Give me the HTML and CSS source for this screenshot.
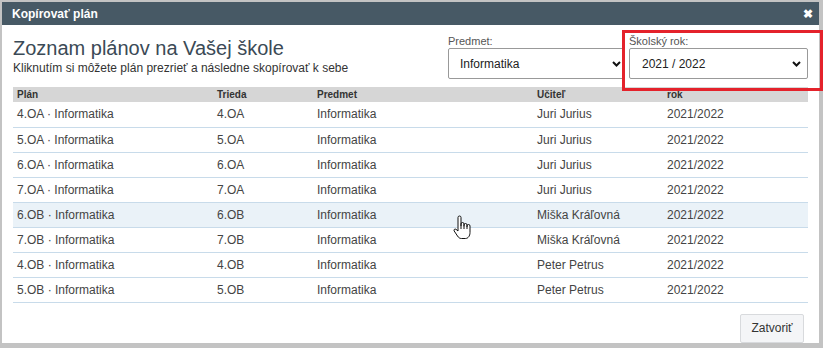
FILE: index.html
```html
<!DOCTYPE html>
<html lang="sk">
<head>
    <meta charset="UTF-8">
    <meta name="viewport" content="width=device-width, initial-scale=1.0">
    <title>Kopírovať plán</title>
    <link rel="stylesheet" href="styles.css">
</head>
<body>
    <div class="dialog">
        <div class="titlebar">
            <span class="title">Kopírovať plán</span>
            <span class="close">&#10006;</span>
        </div>
        <div class="content">
            <div class="top">
                <div class="heading">
                    <h1>Zoznam plánov na Vašej škole</h1>
                    <p class="sub">Kliknutím si môžete plán prezrieť a následne skopírovať k sebe</p>
                </div>
                <div class="filters">
                    <div class="field subject">
                        <label>Predmet:</label>
                        <div class="select">
                            <span>Informatika</span>
                            <svg class="chev" viewBox="0 0 9 6" width="9" height="6"><path d="M1 1 L4.5 4.5 L8 1" fill="none" stroke="#111" stroke-width="2"/></svg>
                        </div>
                    </div>
                    <div class="field year">
                        <label>Školský rok:</label>
                        <div class="select">
                            <span>2021 / 2022</span>
                            <svg class="chev" viewBox="0 0 9 6" width="9" height="6"><path d="M1 1 L4.5 4.5 L8 1" fill="none" stroke="#111" stroke-width="2"/></svg>
                        </div>
                    </div>
                </div>
            </div>

            <table class="plans">
                <thead>
                    <tr>
                        <th class="c1">Plán</th>
                        <th class="c2">Trieda</th>
                        <th class="c3">Predmet</th>
                        <th class="c4">Učiteľ</th>
                        <th class="c5">rok</th>
                    </tr>
                </thead>
                <tbody>
                    <tr><td>4.OA · Informatika</td><td>4.OA</td><td>Informatika</td><td>Juri Jurius</td><td>2021/2022</td></tr>
                    <tr><td>5.OA · Informatika</td><td>5.OA</td><td>Informatika</td><td>Juri Jurius</td><td>2021/2022</td></tr>
                    <tr><td>6.OA · Informatika</td><td>6.OA</td><td>Informatika</td><td>Juri Jurius</td><td>2021/2022</td></tr>
                    <tr><td>7.OA · Informatika</td><td>7.OA</td><td>Informatika</td><td>Juri Jurius</td><td>2021/2022</td></tr>
                    <tr class="hover"><td>6.OB · Informatika</td><td>6.OB</td><td>Informatika</td><td>Miška Kráľovná</td><td>2021/2022</td></tr>
                    <tr><td>7.OB · Informatika</td><td>7.OB</td><td>Informatika</td><td>Miška Kráľovná</td><td>2021/2022</td></tr>
                    <tr><td>4.OB · Informatika</td><td>4.OB</td><td>Informatika</td><td>Peter Petrus</td><td>2021/2022</td></tr>
                    <tr><td>5.OB · Informatika</td><td>5.OB</td><td>Informatika</td><td>Peter Petrus</td><td>2021/2022</td></tr>
                </tbody>
            </table>

            <div class="footer">
                <button class="btn">Zatvoriť</button>
            </div>
        </div>

        <!-- mouse pointer over the hovered row -->
        <svg class="pointer" viewBox="0 0 18 25" width="18" height="25">
            <path d="M5 2.5 a1.5 1.5 0 0 1 3 0 V11 V9 a1.5 1.5 0 0 1 3 0 V11.5 V10 a1.5 1.5 0 0 1 3 0 V12 V11 a1.5 1.5 0 0 1 3 0 V17.5 c0 3.5 -2 6 -4.5 6 H8.5 c-2 0 -3 -1 -4 -2.5 L1.2 16 c-0.8 -1.2 0.6 -2.6 1.8 -1.7 L5 16 Z" fill="#fff" stroke="#111" stroke-width="1" stroke-linejoin="round"/>
            <path d="M8 11 V14 M11 11.5 V14 M14 12 V14" stroke="#111" stroke-width="1" fill="none"/>
        </svg>
    </div>
</body>
</html>
```

FILE: styles.css
```css
* {
    margin: 0;
    padding: 0;
    box-sizing: border-box;
}
body {
    background-color: #c3c3c3;
    font-family: "Liberation Sans", Arial, sans-serif;
    padding: 2px 4px 5px 2px;
    height: 348px;
    overflow: hidden;
}
.dialog {
    position: relative;
    background-color: #fff;
    width: 817px;
    height: 341px;
}
.titlebar {
    height: 23px;
    background-color: #475965;
    color: #fff;
    display: flex;
    align-items: center;
    justify-content: space-between;
    padding: 0 6px 0 10px;
}
.title {
    font-size: 12px;
    font-weight: bold;
}
.close {
    font-size: 12px;
    font-weight: bold;
}
.content {
    padding: 0 11px;
}
.top {
    display: flex;
    justify-content: space-between;
    height: 62px;
}
.heading {
    padding-top: 11px;
}
h1 {
    font-size: 20px;
    font-weight: normal;
    color: #3b4a56;
    line-height: 25px;
}
.sub {
    font-size: 12px;
    color: #333;
    line-height: 14px;
}
.filters {
    display: flex;
    gap: 5px;
    padding-top: 10px;
}
.field {
    position: relative;
    display: flex;
    flex-direction: column;
}
.field label {
    font-size: 11px;
    color: #555;
    line-height: 13px;
}
.select {
    height: 31px;
    border: 1px solid #999;
    border-radius: 2px;
    display: flex;
    align-items: center;
    justify-content: space-between;
    font-size: 12px;
    color: #222;
}
.subject .select {
    width: 176px;
    padding: 0 2px 0 11px;
}
.year .select {
    width: 179px;
    padding: 0 6px 0 12px;
}
.year::after {
    content: "";
    position: absolute;
    left: -7px;
    top: -5px;
    width: 195px;
    height: 55px;
    border: 3px solid #e4222b;
}
.plans {
    width: 795px;
    border-collapse: collapse;
    font-size: 12px;
    color: #444;
}
.plans th {
    background-color: #d6d6d6;
    text-align: left;
    font-size: 10px;
    color: #333;
    height: 15px;
    padding: 0 4px;
}
.c1 { width: 200px; }
.c2 { width: 100px; }
.c3 { width: 220px; }
.c4 { width: 130px; }
.plans td {
    height: 25px;
    padding: 0 4px;
    border-bottom: 1px solid #c8dbea;
}
.plans tr.hover td {
    background-color: #eaf2f8;
}
.footer {
    display: flex;
    justify-content: flex-end;
    padding: 11px 4px 0 0;
}
.btn {
    width: 64px;
    height: 29px;
    background-color: #f4f5f7;
    border: 1px solid #d8dadd;
    border-radius: 2px;
    font-family: "Liberation Sans", Arial, sans-serif;
    font-size: 12px;
    color: #333;
}
.pointer {
    position: absolute;
    left: 451px;
    top: 213px;
}
```
